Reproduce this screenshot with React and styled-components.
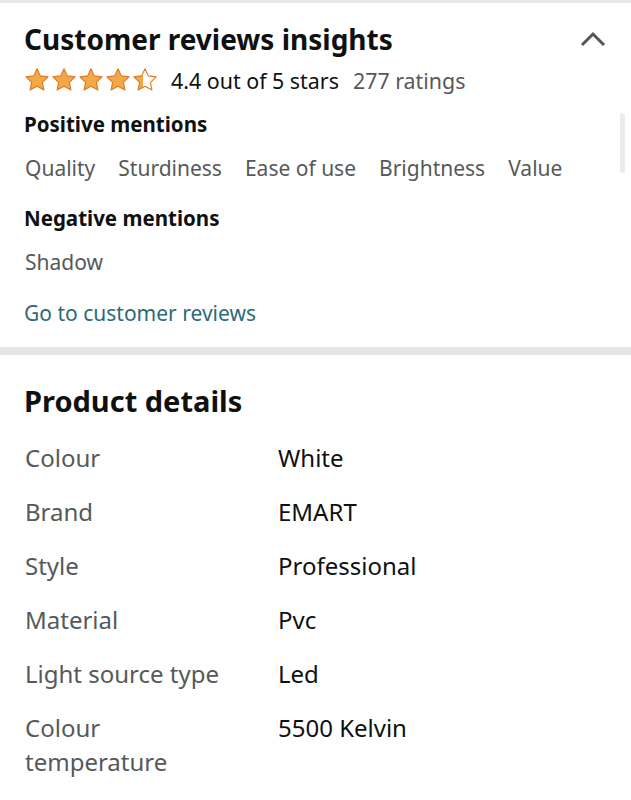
import React from "react";
import styled, { createGlobalStyle } from "styled-components";

const GlobalStyle = createGlobalStyle`
  body {
    margin: 0;
    background: #ffffff;
    font-family: "Noto Sans", "Liberation Sans", sans-serif;
    color: #0f1111;
  }
`;

const Page = styled.div`
  position: relative;
  width: 631px;
  height: 800px;
  overflow: hidden;
  border-top: 3px solid #e7e7e7;
  box-sizing: border-box;
`;

const Scrollbar = styled.div`
  position: absolute;
  top: 110px;
  right: 6px;
  width: 5px;
  height: 60px;
  border-radius: 3px;
  background: #ececec;
`;

const Insights = styled.section`
  padding: 18px 24px 20px;
  border-bottom: 8px solid #e3e6e6;
`;

const HeaderRow = styled.div`
  display: flex;
  justify-content: space-between;
  align-items: center;
`;

const Title = styled.h2`
  margin: 0;
  font-size: 28px;
  font-weight: 700;
  line-height: 36px;
  color: #0f1111;
`;

const Chevron = styled.svg`
  width: 26px;
  height: 16px;
  margin-right: 1px;
`;

const RatingRow = styled.div`
  display: flex;
  align-items: center;
  margin-top: 8px;
  height: 30px;
`;

const Stars = styled.div`
  display: flex;
  gap: 1px;
  margin-right: 13px;
`;

const RatingText = styled.span`
  font-size: 21.4px;
  color: ${(p) => (p.$muted ? "#565959" : "#0f1111")};
  margin-right: 14px;
`;

const SubHeading = styled.h3`
  margin: ${(p) => p.$top || 0}px 0 0;
  font-size: 20.5px;
  font-weight: 700;
  line-height: 28px;
`;

const Mentions = styled.div`
  display: flex;
  gap: 22px;
  margin-top: 16px;
`;

const Mention = styled.span`
  font-size: 21px;
  line-height: 28px;
  color: #565959;
  padding-left: 1px;
`;

const ReviewsLink = styled.a`
  display: block;
  margin-top: 23px;
  font-size: 21px;
  line-height: 28px;
  color: #2c6b7a;
  text-decoration: none;
`;

const Details = styled.section`
  padding: 26px 24px 0;
`;

const DetailsTitle = styled.h2`
  margin: 0 0 14px;
  font-size: 29px;
  font-weight: 700;
  line-height: 40px;
`;

const DetailRow = styled.div`
  display: grid;
  grid-template-columns: 254px 1fr;
  padding: 6px 0 14px;
  font-size: 24px;
  line-height: 34px;
`;

const Label = styled.span`
  padding-left: 1px;
  color: #565959;
  max-width: 212px;
`;

const Value = styled.span`
  color: #0f1111;
`;

const STAR =
  "M12 1.6l3.1 6.6 7.2.9-5.3 5 1.4 7.2L12 17.8l-6.4 3.5 1.4-7.2-5.3-5 7.2-.9z";

const Star = ({ fill }) => {
  const id = `g${Math.round(fill * 100)}`;
  return (
    <svg width="26" height="26" viewBox="0 0 24 24">
      <defs>
        <linearGradient id={id} x1="0" x2="1" y1="0" y2="0">
          <stop offset={fill} stopColor="#f3a847" />
          <stop offset={fill} stopColor="#ffffff" />
        </linearGradient>
      </defs>
      <path d={STAR} fill={`url(#${id})`} stroke="#de7921" strokeWidth="1" strokeLinejoin="round" />
    </svg>
  );
};

const positive = ["Quality", "Sturdiness", "Ease of use", "Brightness", "Value"];

const details = [
  ["Colour", "White"],
  ["Brand", "EMART"],
  ["Style", "Professional"],
  ["Material", "Pvc"],
  ["Light source type", "Led"],
  ["Colour temperature", "5500 Kelvin"],
];

const App = () => (
  <>
    <GlobalStyle />
    <Page>
      <Scrollbar />
      <Insights>
        <HeaderRow>
          <Title>Customer reviews insights</Title>
          <Chevron viewBox="0 0 26 16">
            <path d="M2 14L13 3l11 11" fill="none" stroke="#555" strokeWidth="3" />
          </Chevron>
        </HeaderRow>
        <RatingRow>
          <Stars>
            {[1, 1, 1, 1, 0.42].map((f, i) => (
              <Star key={i} fill={f} />
            ))}
          </Stars>
          <RatingText>4.4 out of 5 stars</RatingText>
          <RatingText $muted>277 ratings</RatingText>
        </RatingRow>
        <SubHeading $top={15}>Positive mentions</SubHeading>
        <Mentions>
          {positive.map((m) => (
            <Mention key={m}>{m}</Mention>
          ))}
        </Mentions>
        <SubHeading $top={22}>Negative mentions</SubHeading>
        <Mentions>
          <Mention>Shadow</Mention>
        </Mentions>
        <ReviewsLink href="#">Go to customer reviews</ReviewsLink>
      </Insights>
      <Details>
        <DetailsTitle>Product details</DetailsTitle>
        {details.map(([k, v]) => (
          <DetailRow key={k}>
            <Label>{k}</Label>
            <Value>{v}</Value>
          </DetailRow>
        ))}
      </Details>
    </Page>
  </>
);

export default App;
